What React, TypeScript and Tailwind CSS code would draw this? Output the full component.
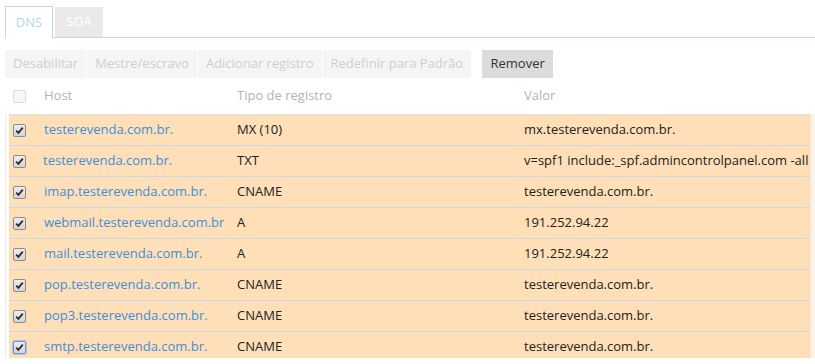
import React from 'react';

type DnsRecord = {
  host: string;
  type: string;
  value: string;
  shift?: boolean;
};

const records: DnsRecord[] = [
  { host: 'testerevenda.com.br.', type: 'MX (10)', value: 'mx.testerevenda.com.br.' },
  { host: 'testerevenda.com.br.', type: 'TXT', value: 'v=spf1 include:_spf.admincontrolpanel.com -all', shift: true },
  { host: 'imap.testerevenda.com.br.', type: 'CNAME', value: 'testerevenda.com.br.' },
  { host: 'webmail.testerevenda.com.br', type: 'A', value: '191.252.94.22' },
  { host: 'mail.testerevenda.com.br.', type: 'A', value: '191.252.94.22' },
  { host: 'pop.testerevenda.com.br.', type: 'CNAME', value: 'testerevenda.com.br.' },
  { host: 'pop3.testerevenda.com.br.', type: 'CNAME', value: 'testerevenda.com.br.' },
  { host: 'smtp.testerevenda.com.br.', type: 'CNAME', value: 'testerevenda.com.br.' },
];

const toolbar = ['Desabilitar', 'Mestre/escravo', 'Adicionar registro', 'Redefinir para Padrão'];

const CheckBox = ({ checked, focused }: { checked: boolean; focused?: boolean }) => {
  if (!checked) {
    return <span className="block w-[13px] h-[13px] rounded-[2px] border border-[#dcdcdc] bg-[#f6f6f6]" />;
  }
  return (
    <span
      className={
        'flex items-center justify-center w-[13px] h-[13px] rounded-[2px] border bg-gradient-to-b from-[#ededed] to-[#d4d4d4] ' +
        (focused ? 'border-[#6f97d6] shadow-[0_0_0_1px_#a9c2ea]' : 'border-[#8c8c8c]')
      }
    >
      <svg width="9" height="9" viewBox="0 0 9 9">
        <path d="M1.2 4.6 L3.4 6.9 L7.8 1.6" fill="none" stroke="#2b2b2b" strokeWidth="1.8" />
      </svg>
    </span>
  );
};

export default function App() {
  return (
    <div className="w-[815px] h-[364px] overflow-hidden bg-white text-[13px] font-['Open_Sans',sans-serif]">
      {/* tabs */}
      <div className="flex items-end pt-[6px] pl-[5px]">
        <div className="h-[32px] w-[48px] flex items-center justify-center border border-b-0 border-[#bcd9e6] bg-white text-[#b5d6e6]">
          DNS
        </div>
        <div className="flex-1 flex items-end border-b border-[#bcd9e6]">
          <div className="ml-[2px] h-[30px] w-[48px] flex items-center justify-center bg-[#e9e9e9] text-white">SOA</div>
        </div>
      </div>

      {/* toolbar */}
      <div className="flex mt-[12px] pl-[5px] h-[28px]">
        {toolbar.map((t) => (
          <div key={t} className="h-full px-[8px] mr-px flex items-center bg-[#f5f5f5] text-[#cfcfcf]">
            {t}
          </div>
        ))}
        <div className="ml-[10px] h-full w-[71px] flex items-center justify-center bg-[#dcdcdc] text-[#333]">Remover</div>
      </div>

      {/* header */}
      <div className="grid grid-cols-[31px_193px_287px_1fr] items-center pl-[13px] h-[36px] text-[#b3b3b3]">
        <CheckBox checked={false} />
        <span>Host</span>
        <span>Tipo de registro</span>
        <span>Valor</span>
      </div>

      {/* records */}
      <div className="flex h-[244px] ml-[5px] overflow-hidden">
        <div className="flex-1 border-l border-[#efe9e2] pl-[3px]">
          <div className="border-t border-[#dedede]">
            {records.map((r, i) => (
              <div
                key={i}
                className="grid grid-cols-[31px_193px_287px_1fr] items-center pl-[4px] h-[31px] bg-[#fedfb8] border-b border-[#c9d7e6] whitespace-nowrap"
              >
                <CheckBox checked focused={i === records.length - 1} />
                <span className={'text-[#3f8fd8] ' + (r.shift ? '-ml-px' : '')}>{r.host}</span>
                <span className="text-[#222]">{r.type}</span>
                <span className="text-[#222]">{r.value}</span>
              </div>
            ))}
          </div>
        </div>
        <div className="w-[5px] bg-[#fcf3ea] border-l border-[#f3e6d8]" />
      </div>
    </div>
  );
}
